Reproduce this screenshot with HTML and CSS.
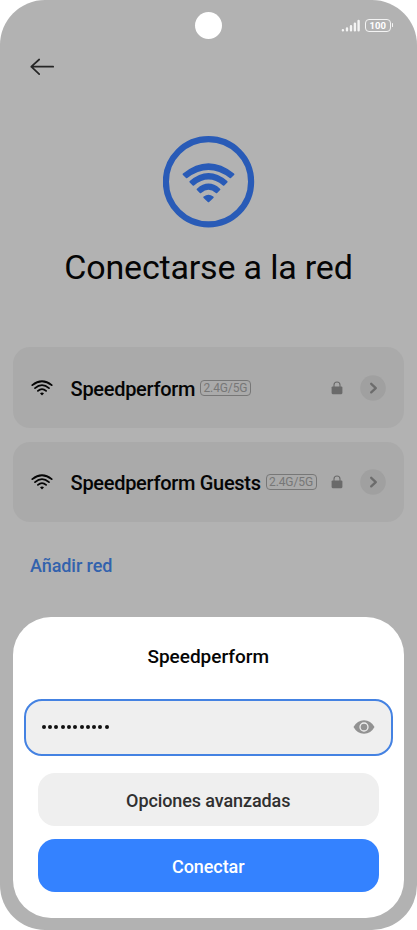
FILE: index.html
```html
<!DOCTYPE html>
<html lang="es">
<head>
<meta charset="utf-8">
<title>Conectarse a la red</title>
<link rel="stylesheet" href="styles.css">
</head>
<body>
<svg width="0" height="0" class="defs">
  <symbol id="wifi" viewBox="0 0 22 16">
    <g fill="none" stroke="#050505" stroke-width="1.8" stroke-linecap="round">
      <path d="M1.3 5.1Q11-2.5 20.7 5.1"/><path d="M4 8.1Q11 2.1 18 8.1"/><path d="M6.9 10.9Q11 7.3 15.1 10.9"/>
    </g>
    <path d="M9 13.2Q11 11.6 13 13.2L11.5 15Q11 15.5 10.5 15Z" fill="#050505"/>
  </symbol>
  <symbol id="lock" viewBox="0 0 12 14">
    <path d="M3 6V4a3 3 0 0 1 6 0V6" fill="none" stroke="#6a6a6a" stroke-width="1.1"/>
    <rect x=".6" y="5.4" width="10.8" height="7.8" rx="1.1" fill="#6a6a6a"/>
  </symbol>
  <symbol id="chevron" viewBox="0 0 26 26">
    <circle cx="13" cy="13" r="12.8" fill="#a0a0a0"/>
    <path d="M11.2 8.8L15.8 13.1L11.2 17.4" fill="none" stroke="#6c6c6c" stroke-width="2.3" stroke-linecap="round" stroke-linejoin="round"/>
  </symbol>
</svg>
<main class="phone">
  <header class="status">
    <span class="camera"></span>
    <svg class="signal" width="19" height="13" viewBox="0 0 19 13" fill="none" stroke="#f4f4f4" stroke-width="2.4" stroke-linecap="round">
      <path d="M1.9 11.1v.1M6 9.4v1.8M10 7.2v4M13.9 4.6v6.6M17.6 1.9v9.3"/>
    </svg>
    <span class="battery">100</span>
  </header>
  <svg class="back" width="26" height="20" viewBox="0 0 26 20" fill="none" stroke="#262626" stroke-width="1.7" stroke-linecap="round" stroke-linejoin="round">
    <path d="M24.2 9.7H2.3M10.2 2.5L2.3 9.7L10.2 17.2"/>
  </svg>
  <svg class="hero" width="92" height="92" viewBox="0 0 92 92">
    <circle cx="45.5" cy="45.8" r="42.6" fill="none" stroke="#295bb7" stroke-width="6.2"/>
    <g fill="#295bb7" stroke="#295bb7" stroke-width="2" stroke-linejoin="round">
      <path d="M20.6 38.3Q45.5 18.3 70.4 38.3L67.3 41.2Q45.5 24.7 23.7 41.2Z"/>
      <path d="M27.4 45.8Q45.5 30.2 63.6 45.8L60.6 48.7Q45.5 36.3 30.4 48.7Z"/>
      <path d="M34.6 53.4Q45.5 43.9 56.4 53.4L53.5 56.3Q45.5 49.3 37.5 56.3Z"/>
      <path d="M41.3 61.3Q45.5 58.1 49.7 61.3L45.5 65.3Z"/>
    </g>
  </svg>
  <h1>Conectarse a la red</h1>
  <section class="networks">
    <article class="network">
      <svg class="wifi"><use href="#wifi"/></svg>
      <span class="name">Speedperform</span><span class="band">2.4G/5G</span>
      <svg class="lock"><use href="#lock"/></svg><svg class="chevron"><use href="#chevron"/></svg>
    </article>
    <article class="network">
      <svg class="wifi"><use href="#wifi"/></svg>
      <span class="name">Speedperform Guests</span><span class="band">2.4G/5G</span>
      <svg class="lock"><use href="#lock"/></svg><svg class="chevron"><use href="#chevron"/></svg>
    </article>
  </section>
  <a class="add">Añadir red</a>
  <section class="dialog">
    <h2>Speedperform</h2>
    <div class="password">
      <span class="dots"><i></i><i></i><i></i><i></i><i></i><i></i><i></i><i></i><i></i><i></i><i></i></span>
      <svg width="22" height="16" viewBox="0 0 22 16">
        <path d="M.5 8Q4.2 1.2 11 1.2T21.5 8Q17.8 14.8 11 14.8T.5 8Z" fill="#929292"/>
        <circle cx="11" cy="8" r="4" fill="#929292" stroke="#efefef" stroke-width="1.3"/>
      </svg>
    </div>
    <button class="secondary">Opciones avanzadas</button>
    <button class="primary">Conectar</button>
  </section>
</main>
</body>
</html>
```
FILE: styles.css
```css
* { box-sizing: border-box; }
body { margin: 0; background: #fff; font-family: Roboto, sans-serif; }
.defs { position: absolute; }
.phone {
  width: 417px; height: 930px; border-radius: 45px; background: #b2b2b2;
  display: flex; flex-direction: column; overflow: hidden;
}
.status {
  height: 51px; flex: none; display: flex; align-items: center; padding-left: 195px;
}
.camera { width: 27px; height: 27px; border-radius: 50%; background: #fff; }
.signal { margin-left: 118.5px; }
.battery {
  position: relative; width: 26px; height: 13px; margin-left: 5.3px; border: 1.4px solid #f4f4f4;
  border-radius: 4px; color: #fff; font-size: 9.5px; font-weight: 700; line-height: 12px; text-align: center;
}
.battery::after {
  content: ""; position: absolute; right: -3.5px; top: 3.4px; width: 1.6px; height: 4px;
  border-radius: 1px; background: #f4f4f4;
}
.back { flex: none; margin: 6px 0 0 29px; }
.hero { flex: none; margin: 59px 0 0 163px; }
h1 { margin: 16px 0 0; height: 46px; line-height: 46px; text-align: center; font-size: 34px; font-weight: 400; letter-spacing: -.18px; color: #050505; white-space: nowrap; }
.networks { display: flex; flex-direction: column; gap: 13.5px; margin: 57.4px 13px 0; }
.network { display: flex; align-items: center; height: 80.7px; padding: 0 18px; border-radius: 17px; background: #aaa; }
.wifi { width: 22px; height: 16px; margin-right: 17.6px; flex: none; }
.name { padding-top: 2px; font-size: 20px; font-weight: 500; line-height: 24px; letter-spacing: -.3px; color: #050505; white-space: nowrap; }
.band {
  width: 51px; height: 16px; margin-left: 4.8px; border: 1px solid #777; border-radius: 4px;
  color: #777; font-size: 12px; line-height: 15px; letter-spacing: -.1px; text-align: center; flex: none;
}
.lock { width: 12px; height: 14px; margin-left: auto; flex: none; }
.chevron { width: 26px; height: 26px; margin-left: 16.6px; flex: none; }
.add { margin: 31.7px 0 0 30px; height: 24px; line-height: 24px; font-size: 18px; font-weight: 500; letter-spacing: -.07px; color: #3262ad; }
.dialog {
  display: flex; flex-direction: column; align-items: center; flex: none;
  width: 391.5px; height: 301px; margin: 39px 0 0 12.5px; border-radius: 38px; background: #fff;
}
h2 { margin: 28px 0 0; height: 24px; line-height: 24px; font-size: 19px; font-weight: 500; color: #050505; }
.password {
  display: flex; align-items: center; justify-content: space-between; flex: none;
  width: 369px; height: 57px; margin-top: 30px; padding: 0 16px;
  border: 2px solid #4482e2; border-radius: 18px; background: #efefef;
}
.dots { display: flex; gap: 2.3px; }
.dots i { width: 4px; height: 4px; border-radius: 50%; background: #111; }
button {
  width: 341px; height: 53px; flex: none; border: 0; border-radius: 17px; padding: 2px 0 0;
  font-family: inherit; font-size: 18px; font-weight: 500; letter-spacing: -.1px;
}
.secondary { margin-top: 17px; background: #efefef; color: #303030; }
.primary { margin-top: 13px; background: #3482ff; color: #fff; }
```
